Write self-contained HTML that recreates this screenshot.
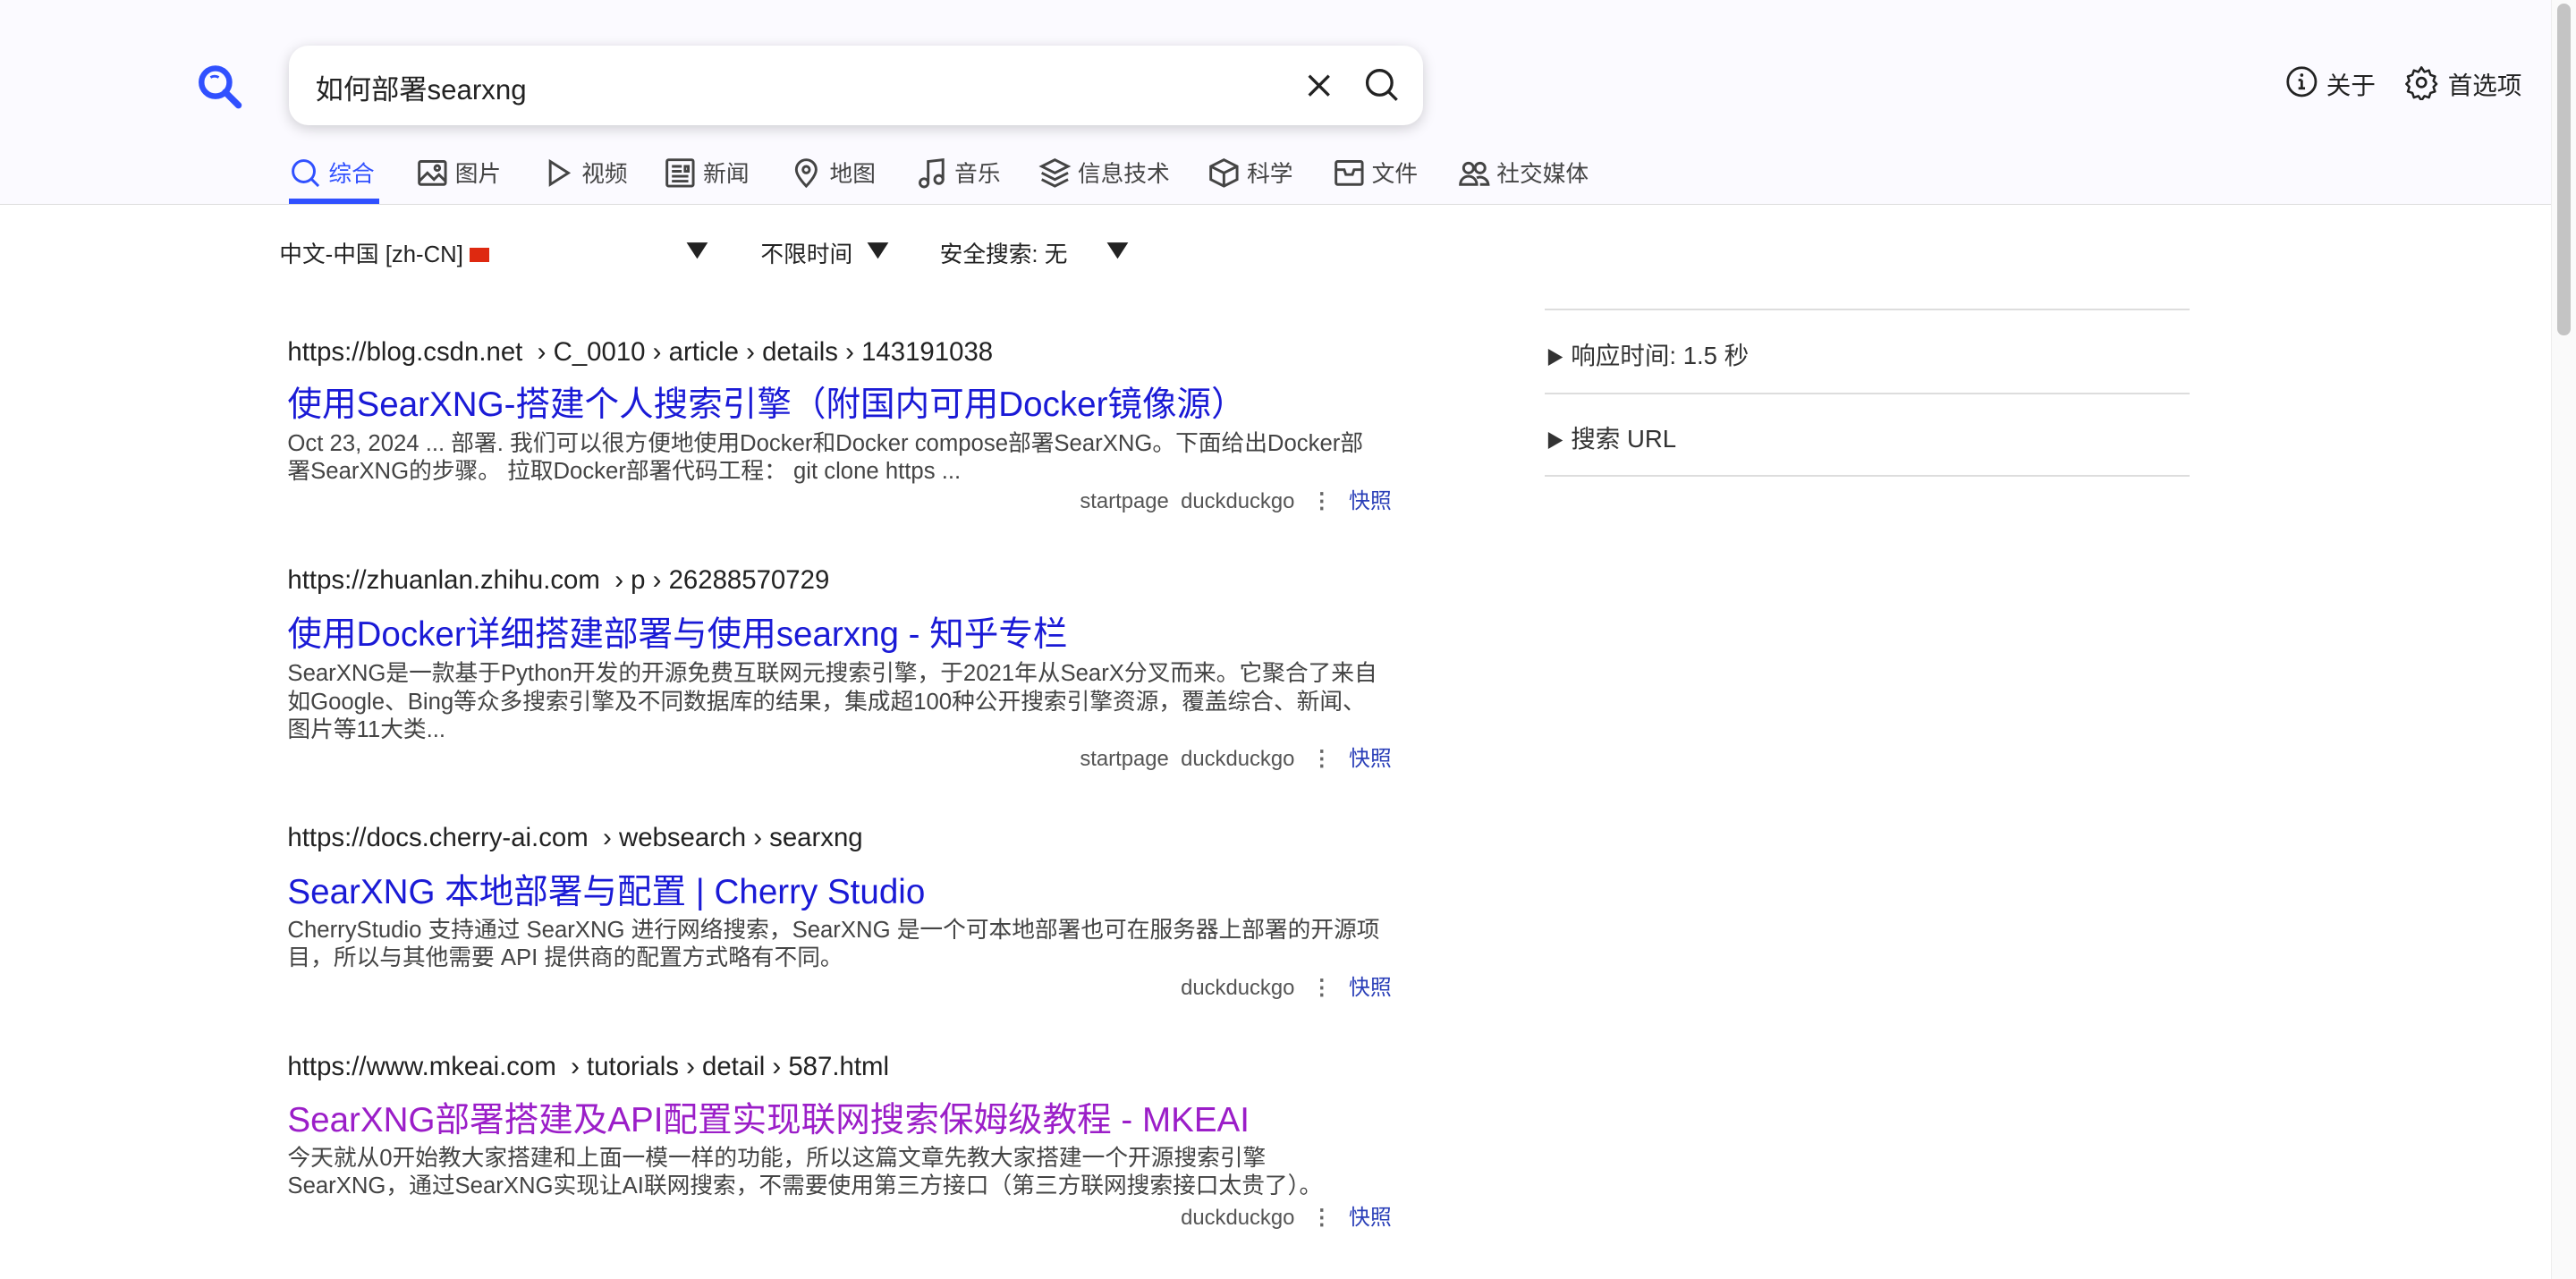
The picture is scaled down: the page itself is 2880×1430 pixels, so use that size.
<!DOCTYPE html>
<html><head><meta charset="utf-8"><style>
html,body{margin:0;padding:0;width:2880px;height:1430px;overflow:hidden;background:#fff}
#w{zoom:1.83673;width:1568px;height:779px;position:relative;font-family:"Liberation Sans","Noto Sans CJK SC",sans-serif;color:#222}
.a{position:absolute;white-space:nowrap}
#hdr{position:absolute;left:0;top:0;width:1553px;height:124px;background:#fbfaff;border-bottom:1px solid #ddd}
#sb{position:absolute;left:1553px;top:0;width:15px;height:779px;background:#fafafa;border-left:1px solid #eee}
#sb div{position:absolute;left:3px;top:2px;width:8px;height:202px;background:#c4c4c4;border-radius:4px}
#box{left:176px;top:28px;width:690px;height:48px;background:#fff;border-radius:12px;box-shadow:0 2px 8px rgba(0,0,0,.18)}
.tab{position:absolute;top:95px;font-size:14px;color:#444;display:flex;align-items:center;gap:4px}
.tab svg{width:20px;height:20px;fill:none;stroke:#444;stroke-width:1.6}
.url{font-size:16px;color:#222}
.ttl{font-size:21px;color:#1a1ad6}
.cnt{font-size:14px;color:#444;line-height:17px;width:665px;white-space:normal}
.eng{font-size:13px;color:#555;text-align:right;width:672px}
.eng b{font-weight:normal;color:#2a3fb8;margin-left:10px}
.dots{display:inline-block;margin-left:10px;color:#666;font-weight:bold}
.hr{position:absolute;left:940px;width:393px;height:1px;background:#ddd}
.arr{font-size:17px;transform:scaleX(1.3);display:inline-block}
</style></head><body><div id="w">
<div id="hdr"></div>
<div id="sb"><div></div></div>
<svg class="a" style="left:118px;top:38px" width="30" height="30" viewBox="0 0 30 30"><circle cx="13" cy="12" r="8.5" fill="none" stroke="#3050ff" stroke-width="3.5"/><path d="M19 18l8 8" stroke="#3050ff" stroke-width="4" stroke-linecap="round"/><path d="M10 9a5 5 0 0 1 5 0" stroke="#3050ff" stroke-width="1.6" fill="none"/></svg>
<div class="a" id="box"></div>
<div class="a" style="left:192px;top:41px;font-size:17px;color:#222">如何部署searxng</div>
<svg class="a" style="left:795px;top:44px" width="16" height="16"><path d="M2 2l12 12M14 2L2 14" stroke="#222" stroke-width="1.8"/></svg>
<svg class="a" style="left:830px;top:41px" width="22" height="22"><circle cx="10" cy="9.5" r="7.5" fill="none" stroke="#222" stroke-width="1.8"/><path d="M15.5 15l5 5" stroke="#222" stroke-width="1.8"/></svg>
<div class="tab" style="left:176px;color:#3050ff"><svg viewBox="0 0 20 20" style="stroke:#3050ff"><circle cx="9" cy="9" r="6.5"/><path d="M14 14l4 4"/></svg>综合</div>
<div class="a" style="left:176px;top:121px;width:55px;height:3px;background:#3050ff"></div>
<div class="tab" style="left:253px"><svg viewBox="0 0 20 20"><rect x="2" y="3" width="16" height="14" rx="1"/><path d="M2 15l5-5 4 4 3-3 4 4"/><circle cx="13" cy="7" r="1.5"/></svg>图片</div>
<div class="tab" style="left:330px"><svg viewBox="0 0 20 20"><path d="M5 3l11 7-11 7z"/></svg>视频</div>
<div class="tab" style="left:404px"><svg viewBox="0 0 20 20"><rect x="2" y="2" width="16" height="16" rx="1"/><path d="M5 6h6M5 9h6M5 12h10M5 15h10M13 6h2v3h-2z"/></svg>新闻</div>
<div class="tab" style="left:481px"><svg viewBox="0 0 20 20"><path d="M10 18s-6-6-6-10a6 6 0 0 1 12 0c0 4-6 10-6 10z"/><circle cx="10" cy="8" r="2"/></svg>地图</div>
<div class="tab" style="left:557px"><svg viewBox="0 0 20 20"><path d="M8 16V3l9-1v12"/><circle cx="5.5" cy="16" r="2.5"/><circle cx="14.5" cy="14" r="2.5"/></svg>音乐</div>
<div class="tab" style="left:632px"><svg viewBox="0 0 20 20"><path d="M10 2l8 4-8 4-8-4z"/><path d="M2 10l8 4 8-4M2 14l8 4 8-4"/></svg>信息技术</div>
<div class="tab" style="left:735px"><svg viewBox="0 0 20 20"><path d="M10 2l8 4v8l-8 4-8-4V6z"/><path d="M2 6l8 4 8-4M10 10v8"/></svg>科学</div>
<div class="tab" style="left:811px"><svg viewBox="0 0 20 20"><rect x="2" y="3" width="16" height="14" rx="1"/><path d="M2 8h5l1 3h4l1-3h5"/></svg>文件</div>
<div class="tab" style="left:887px"><svg viewBox="0 0 20 20"><circle cx="7" cy="7" r="3"/><circle cx="14" cy="7" r="3"/><path d="M2 17a5 5 0 0 1 10 0zM12 13a5 5 0 0 1 7 4h-5"/></svg>社交媒体</div>
<svg class="a" style="left:1391px;top:40px" width="20" height="20"><circle cx="10" cy="10" r="8.5" fill="none" stroke="#222" stroke-width="1.5"/><path d="M10 9v5M8 14h4M8 9h2" stroke="#222" stroke-width="1.5"/><circle cx="10" cy="6" r="1" fill="#222"/></svg>
<div class="a" style="left:1416px;top:40px;font-size:15px">关于</div>
<svg class="a" style="left:1463px;top:39px" width="22" height="22" viewBox="0 0 24 24"><circle cx="12" cy="12" r="3" fill="none" stroke="#222" stroke-width="1.6"/><path d="M12 2l2 3 3-1 1 3 3 1-1 3 2 2-2 2 1 3-3 1-1 3-3-1-2 3-2-3-3 1-1-3-3-1 1-3-2-2 2-2-1-3 3-1 1-3 3 1z" fill="none" stroke="#222" stroke-width="1.5" stroke-linejoin="round"/></svg>
<div class="a" style="left:1490px;top:40px;font-size:15px">首选项</div>

<div class="a" style="left:170px;top:144px;font-size:14px">中文-中国 [zh-CN] <span style="display:inline-block;width:12px;height:9px;background:#de2910"></span></div>
<div class="a" style="left:416px;top:142px"><span class="arr">▼</span></div>
<div class="a" style="left:463px;top:144px;font-size:14px">不限时间</div>
<div class="a" style="left:526px;top:142px"><span class="arr">▼</span></div>
<div class="a" style="left:572px;top:144px;font-size:14px">安全搜索: 无</div>
<div class="a" style="left:672px;top:142px"><span class="arr">▼</span></div>

<div class="a url" style="left:175px;top:205px">https://blog.csdn.net &nbsp;› C_0010 › article › details › 143191038</div>
<div class="a ttl" style="left:175px;top:229px">使用SearXNG-搭建个人搜索引擎（附国内可用Docker镜像源）</div>
<div class="a cnt" style="left:175px;top:262px">Oct 23, 2024 ... 部署. 我们可以很方便地使用Docker和Docker compose部署SearXNG。下面给出Docker部署SearXNG的步骤。 拉取Docker部署代码工程： git clone https ...</div>
<div class="a eng" style="left:175px;top:294px">startpage &nbsp;duckduckgo<span class="dots">⋮</span><b>快照</b></div>

<div class="a url" style="left:175px;top:344px">https://zhuanlan.zhihu.com &nbsp;› p › 26288570729</div>
<div class="a ttl" style="left:175px;top:369px">使用Docker详细搭建部署与使用searxng - 知乎专栏</div>
<div class="a cnt" style="left:175px;top:402px">SearXNG是一款基于Python开发的开源免费互联网元搜索引擎，于2021年从SearX分叉而来。它聚合了来自如Google、Bing等众多搜索引擎及不同数据库的结果，集成超100种公开搜索引擎资源，覆盖综合、新闻、图片等11大类...</div>
<div class="a eng" style="left:175px;top:451px">startpage &nbsp;duckduckgo<span class="dots">⋮</span><b>快照</b></div>

<div class="a url" style="left:175px;top:501px">https://docs.cherry-ai.com &nbsp;› websearch › searxng</div>
<div class="a ttl" style="left:175px;top:526px">SearXNG 本地部署与配置 | Cherry Studio</div>
<div class="a cnt" style="left:175px;top:558px">CherryStudio 支持通过 SearXNG 进行网络搜索，SearXNG 是一个可本地部署也可在服务器上部署的开源项目，所以与其他需要 API 提供商的配置方式略有不同。</div>
<div class="a eng" style="left:175px;top:590px">duckduckgo<span class="dots">⋮</span><b>快照</b></div>

<div class="a url" style="left:175px;top:640px">https://www.mkeai.com &nbsp;› tutorials › detail › 587.html</div>
<div class="a ttl" style="left:175px;top:665px;color:#9b1ec8">SearXNG部署搭建及API配置实现联网搜索保姆级教程 - MKEAI</div>
<div class="a cnt" style="left:175px;top:697px">今天就从0开始教大家搭建和上面一模一样的功能，所以这篇文章先教大家搭建一个开源搜索引擎SearXNG，通过SearXNG实现让AI联网搜索，不需要使用第三方接口（第三方联网搜索接口太贵了）。</div>
<div class="a eng" style="left:175px;top:730px">duckduckgo<span class="dots">⋮</span><b>快照</b></div>

<div class="hr" style="top:188px"></div>
<div class="a" style="left:941px;top:204px;font-size:15px;color:#333"><span style="font-size:11px">▶</span> 响应时间: 1.5 秒</div>
<div class="hr" style="top:239px"></div>
<div class="a" style="left:941px;top:255px;font-size:15px;color:#333"><span style="font-size:11px">▶</span> 搜索 URL</div>
<div class="hr" style="top:289px"></div>
</div></body></html>
